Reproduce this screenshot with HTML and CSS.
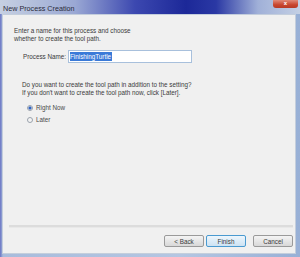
FILE: index.html
```html
<!DOCTYPE html>
<html>
<head>
	<title>New Process Creation</title>
	<link rel="stylesheet" href="styles.css">
</head>
<body>
	<div class="window">
		<div class="titlebar">
			<span class="title">New Process Creation</span>
			<span class="close">x</span>
		</div>
		<div class="client">
			<p class="intro">Enter a name for this process and choose<br>whether to create the tool path.</p>
			<div class="name-row">
				<label for="process-name">Process Name:</label>
				<div class="textbox" id="process-name"><span class="sel">FinishingTurtle</span></div>
			</div>
			<p class="question">Do you want to create the tool path in addition to the setting?<br>If you don't want to create the tool path now, click [Later].</p>
			<div class="radio checked"><span class="dot"></span>Right Now</div>
			<div class="radio"><span class="dot"></span>Later</div>
			<div class="spacer"></div>
			<div class="separator"></div>
			<div class="buttons">
				<button class="btn">&lt; Back</button>
				<button class="btn default">Finish</button>
				<button class="btn cancel">Cancel</button>
			</div>
		</div>
	</div>
</body>
</html>
```

FILE: styles.css
```css
html, body {
	margin: 0;
	padding: 0;
}
body {
	width: 300px;
	height: 257px;
	overflow: hidden;
	font-family: "Liberation Sans", Arial, sans-serif;
	background: #a9bedc;
}
.window {
	width: 300px;
	height: 257px;
	display: flex;
	flex-direction: column;
	box-sizing: border-box;
	padding: 0 4px 3px 2px;
	background: linear-gradient(to right, #6a74c4 0px, #a8bcdc 3px, #b4c6e2 60%, #98b0d6 100%);
}
.titlebar {
	height: 14px;
	flex: none;
	position: relative;
	margin: 0 -4px 0 -2px;
	background: linear-gradient(to right, #c6d0e2 0%, #9aa8d4 25%, #3c48b0 45%, #1c2898 62%, #2a38a4 72%, #a0b0d8 86%, #c4d0e4 100%);
}
.title {
	display: block;
	padding: 4px 0 0 3px;
	font-size: 7.2px;
	color: #2a2a3a;
}
.close {
	position: absolute;
	right: 2px;
	top: 0;
	width: 25px;
	height: 8px;
	background: linear-gradient(#e08a78, #c8452e 60%, #b83a26);
	border-radius: 0 0 3px 3px;
	color: #fff;
	font-size: 6px;
	font-weight: bold;
	line-height: 7px;
	text-align: center;
}
.client {
	flex: 1;
	display: flex;
	flex-direction: column;
	background: #f0f0f0;
	border: 1px solid #c4cedc;
	padding: 0 2px 0 4px;
	font-size: 6.3px;
	color: #3a3a3a;
}
.intro {
	margin: 12px 0 0 7px;
	line-height: 8px;
}
.name-row {
	display: flex;
	align-items: center;
	margin: 7px 0 0 16px;
}
.name-row label {
	width: 45px;
}
.textbox {
	width: 121px;
	height: 10px;
	border: 1px solid #a8c0dc;
	background: #fff;
	padding: 1px 0 0 1px;
}
.sel {
	display: inline-block;
	background: #3a7ad8;
	color: #fff;
	height: 9px;
	line-height: 9px;
	padding-right: 1px;
}
.question {
	margin: 18px 0 0 15px;
	line-height: 8px;
}
.radio {
	display: flex;
	align-items: center;
	margin: 7px 0 0 20px;
	color: #4a4a4a;
}
.radio + .radio {
	margin-top: 5px;
}
.dot {
	width: 4px;
	height: 4px;
	border: 1px solid #9aa2ac;
	border-radius: 50%;
	background: #f4f4f4;
	margin-right: 3px;
}
.checked .dot {
	background: radial-gradient(circle, #2a5cb8 0, #3a6cc8 1.4px, #f4f4f4 1.8px);
}
.spacer {
	flex: 1;
}
.separator {
	height: 2px;
	background: #dcdcdc;
	border-bottom: 1px solid #e8e8e8;
	margin: 0 0 7px 2px;
}
.buttons {
	display: flex;
	justify-content: flex-end;
	gap: 2px;
	margin-bottom: 6px;
}
.btn {
	width: 40px;
	height: 12px;
	padding: 0;
	font-family: inherit;
	font-size: 6.3px;
	color: #3a3a3a;
	border: 1px solid #9a9a9a;
	border-radius: 2px;
	background: linear-gradient(#f4f4f4, #e6e6e6 50%, #d8d8d8);
}
.default {
	border-color: #4a9ad0;
	background: linear-gradient(#eef6fc, #dcecf8 50%, #cde2f2);
}
.cancel {
	margin-left: 5px;
}
```
